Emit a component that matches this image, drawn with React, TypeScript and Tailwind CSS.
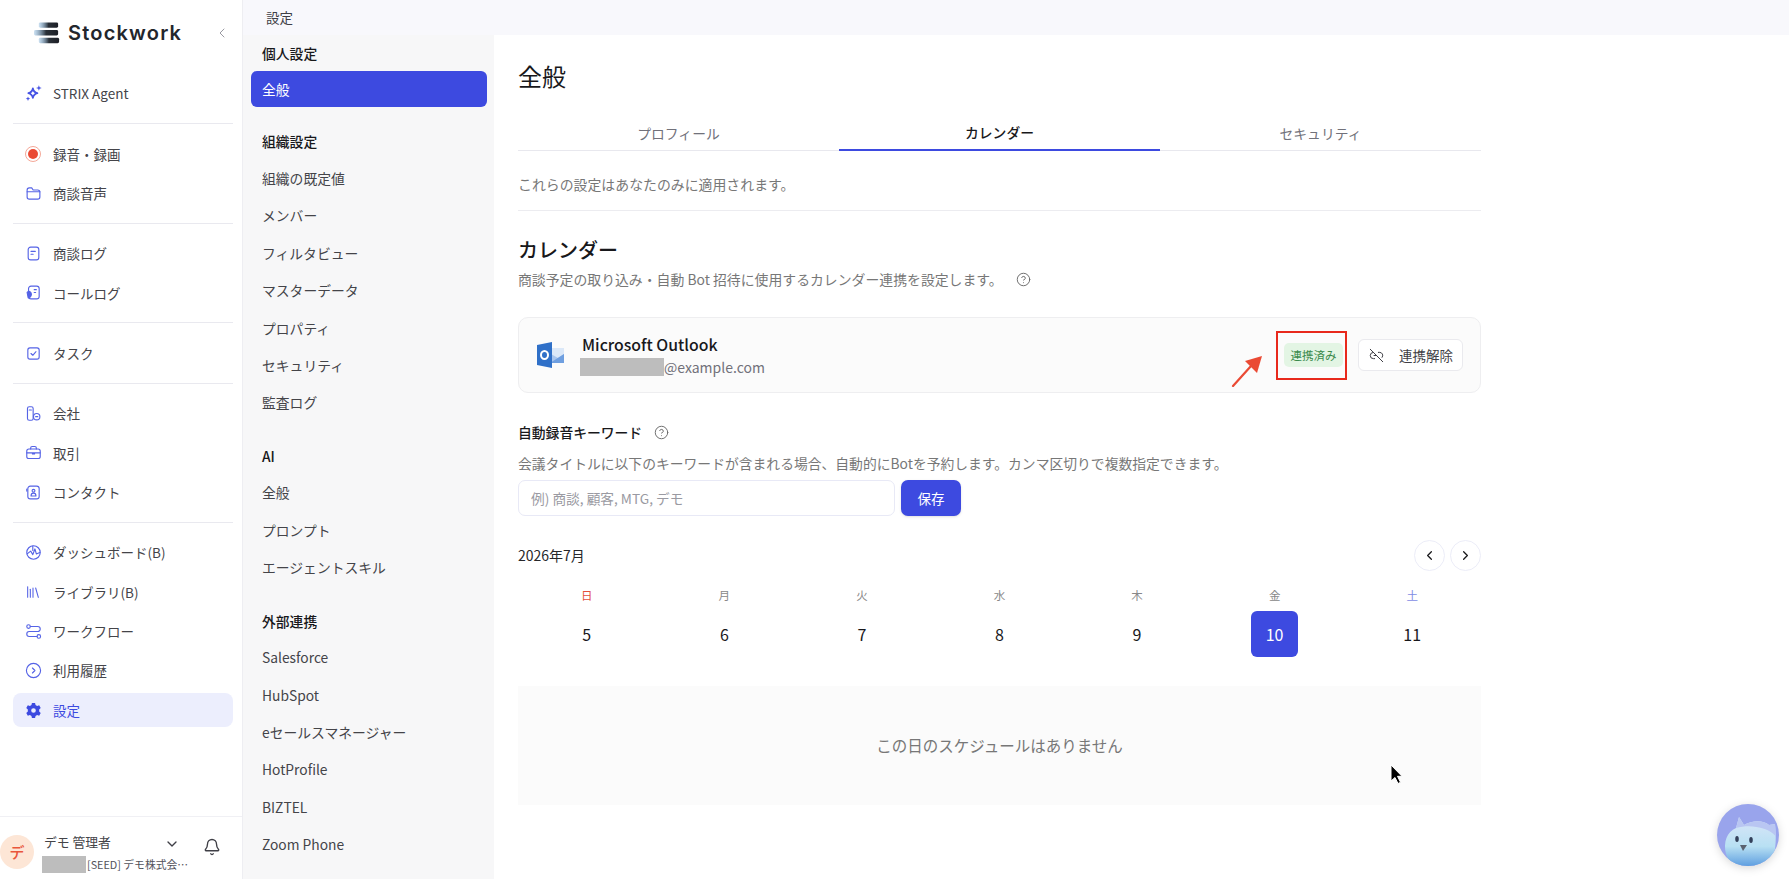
import { Bell, ChevronDown, ChevronLeft, ChevronRight, CircleHelp, Library, Link2Off } from "lucide-react";
import type { ReactNode } from "react";

const Ico = ({ children }: { children: ReactNode }) => (
  <svg viewBox="0 0 24 24" className="w-[17px] h-[17px] text-[#5563e6]" fill="none" stroke="currentColor" strokeWidth="1.600" strokeLinecap="round" strokeLinejoin="round">
    {children}
  </svg>
);

const SparkIcon = () => (
  <svg viewBox="0 0 24 24" className="w-[18px] h-[18px] text-[#4653e4]" fill="currentColor">
    <path d="M10.500 6c.7 3.600 2.400 5.400 6 6.300-3.600.9-5.300 2.700-6 6.300-.7-3.600-2.400-5.400-6-6.300 3.600-.9 5.300-2.700 6-6.300z" fill="none" stroke="currentColor" strokeWidth="2.400" strokeLinejoin="round" />
    <path d="M18.500 1.500l1 2.800 2.800 1-2.800 1-1 2.800-1-2.800-2.800-1 2.800-1zM4 16.500l.9 2.100 2.100.9-2.100.9-.9 2.100-.9-2.100-2.100-.9 2.100-.9z" />
  </svg>
);

const RecIcon = () => (
  <span className="w-[16px] h-[16px] rounded-full border border-[#f5a898] flex items-center justify-center">
    <span className="w-[10px] h-[10px] rounded-full bg-[#ea4a34]" />
  </span>
);

const GearIcon = () => (
  <svg viewBox="0 0 24 24" className="w-[17px] h-[17px] text-[#3d4ae0]" fill="currentColor">
    <path fillRule="evenodd" d="M9.800 1.500h4.400l.7 2.900 2.200 1.200 2.900-.9 2.200 3.800-2.200 2.100v2.800l2.200 2.100-2.200 3.800-2.900-.9-2.200 1.200-.7 2.900H9.800l-.7-2.900-2.200-1.200-2.900.9-2.200-3.800 2.200-2.100v-2.800L1.800 8.500 4 4.700l2.900.9 2.200-1.200zM12 8.700a3.300 3.300 0 1 0 0 6.600 3.300 3.300 0 0 0 0-6.600z" />
  </svg>
);

type NavItem = { label: string; icon: ReactNode; active?: boolean };

const navGroups: NavItem[][] = [
  [{ label: "STRIX Agent", icon: <SparkIcon /> }],
  [
    { label: "録音・録画", icon: <RecIcon /> },
    { label: "商談音声", icon: <Ico><path d="M3 7a3 3 0 0 1 3-3h3.500l2 3H18a3 3 0 0 1 3 3v7a3 3 0 0 1-3 3H6a3 3 0 0 1-3-3z" /><path d="M3 9.500h18" /></Ico> },
  ],
  [
    { label: "商談ログ", icon: <Ico><rect x="4.500" y="3" width="15" height="18" rx="3.500" /><path d="M8.500 9h6M8.500 13h3" /></Ico> },
    { label: "コールログ", icon: <Ico><rect x="5" y="3" width="15" height="18" rx="3.500" /><path d="M13 8h3M13 12h2" /><path d="M3 12c3-3 6-1 6 2.500S6 20 4.500 19.500z" fill="currentColor" /></Ico> },
  ],
  [{ label: "タスク", icon: <Ico><rect x="4" y="4" width="16" height="16" rx="3" /><path d="M8.500 12l2.500 2.500 4.500-5" /></Ico> }],
  [
    { label: "会社", icon: <Ico><rect x="3.500" y="2.500" width="8" height="19" rx="2.500" /><path d="M6 7h3" /><circle cx="16.500" cy="16.500" r="4.500" /><path d="M15 16.500h3" /></Ico> },
    { label: "取引", icon: <Ico><rect x="2.500" y="7" width="19" height="13.500" rx="3" /><path d="M8 7V5.500a2 2 0 0 1 2-2h4a2 2 0 0 1 2 2V7M2.500 12.500h19M10.500 12.500v1.500h3v-1.500" /></Ico> },
    { label: "コンタクト", icon: <Ico><rect x="4" y="3" width="16" height="18" rx="3.500" /><circle cx="12" cy="9.500" r="2" /><path d="M8.500 17c0-5.500 7-5.500 7 0z" /><path d="M2.500 7v3" /></Ico> },
  ],
  [
    { label: "ダッシュボード(B)", icon: <Ico><circle cx="12" cy="12" r="9.500" /><path d="M3 14l5-4 3 5 3-8 2 7 5-2M11 3v6" /></Ico> },
    { label: "ライブラリ(B)", icon: <Library className="w-[16px] h-[16px] text-[#5563e6]" strokeWidth={1.600} /> },
    { label: "ワークフロー", icon: <Ico><circle cx="5" cy="5" r="2.500" /><circle cx="19.500" cy="19" r="2.500" /><path d="M7.500 5H18a3.500 3.500 0 0 1 0 7H6a3.500 3.500 0 0 0 0 7h11" /></Ico> },
    { label: "利用履歴", icon: <Ico><circle cx="12" cy="12" r="10" /><path d="M10.500 8.500l3.500 3.500-3.500 3.500" /></Ico> },
    { label: "設定", icon: <GearIcon />, active: true },
  ],
];

const settingGroups = [
  { title: "個人設定", items: ["全般"] },
  { title: "組織設定", items: ["組織の既定値", "メンバー", "フィルタビュー", "マスターデータ", "プロパティ", "セキュリティ", "監査ログ"] },
  { title: "AI", items: ["全般", "プロンプト", "エージェントスキル"] },
  { title: "外部連携", items: ["Salesforce", "HubSpot", "eセールスマネージャー", "HotProfile", "BIZTEL", "Zoom Phone"] },
];

const days = [
  { w: "日", d: "5", cls: "text-[#e4503c]" },
  { w: "月", d: "6", cls: "text-[#888]" },
  { w: "火", d: "7", cls: "text-[#888]" },
  { w: "水", d: "8", cls: "text-[#888]" },
  { w: "木", d: "9", cls: "text-[#888]" },
  { w: "金", d: "10", cls: "text-[#888]", selected: true },
  { w: "土", d: "11", cls: "text-[#7f8de4]" },
];

function Sidebar() {
  return (
    <aside className="w-[243px] shrink-0 h-full flex flex-col border-r border-[#eeeef2] bg-white">
      <div className="h-[73.700px] shrink-0 flex items-start pl-[34px] pr-[12px] pt-[21px]">
        <svg viewBox="0 0 28 24" className="w-[27px] h-[24px] mr-[7px]">
          <defs>
            <linearGradient id="lg" x1="0" x2="1" y1="0" y2="0">
              <stop offset="0" stopColor="#6fa8d8" stopOpacity="0.35" />
              <stop offset="0.5" stopColor="#2a3038" />
              <stop offset="1" stopColor="#1c1f26" />
            </linearGradient>
          </defs>
          <rect x="5" y="1" width="20" height="5.500" rx="1.500" fill="url(#lg)" />
          <rect x="0" y="9" width="25" height="5.500" rx="1.500" fill="url(#lg)" />
          <rect x="5" y="17" width="21" height="5.500" rx="1.500" fill="url(#lg)" />
        </svg>
        <span className="text-[20px] leading-[24px] font-semibold text-[#23262c] font-['Inter',sans-serif] tracking-[1.200px]">Stockwork</span>
        <ChevronLeft className="w-[16px] h-[16px] text-[#9a9aa2] ml-auto mt-[4px]" strokeWidth={1.500} />
      </div>
      <nav className="pl-[13px] pr-[9px] flex-1">
        {navGroups.map((group, i) => (
          <div key={i}>
            {i > 0 && <div className="h-px bg-[#e9e9ef] my-[10px]" />}
            {group.map((item) => (
              <div
                key={item.label}
                className={`flex items-center rounded-[8px] ${item.active ? "h-[34px] mt-[3px] bg-[#eceefd] text-[#3d4ae0]" : "h-[39.350px] text-[#444449]"}`}
              >
                <span className="w-[40px] pl-[12px] flex items-center shrink-0">{item.icon}</span>
                <span className="text-[13.500px]">{item.label}</span>
              </div>
            ))}
          </div>
        ))}
      </nav>
      <div className="h-[63px] shrink-0 border-t border-[#f0f0f4] flex items-start">
        <span className="mt-[18px] w-[34px] h-[34px] rounded-full bg-[#fde6d6] text-[#e9563c] flex items-center justify-center text-[15px] font-medium shrink-0">デ</span>
        <div className="ml-[8px] w-[122px] shrink-0 pt-[16px]">
          <div className="text-[12.800px] leading-[18px] text-[#444449] pl-[2px]">デモ 管理者</div>
          <div className="mt-[4px] flex items-center text-[10.800px] leading-[18px] text-[#52525b] whitespace-nowrap">
            <span className="w-[44px] h-[17px] bg-[#bdbdbd] shrink-0 mr-[1px]" />
            <span>[SEED] デモ株式会…</span>
          </div>
        </div>
        <ChevronDown className="w-[16px] h-[16px] text-[#3f3f46] mt-[19px]" strokeWidth={2} />
        <Bell className="w-[18px] h-[18px] text-[#3f3f46] ml-[23px] mt-[21px]" strokeWidth={1.800} />
      </div>
    </aside>
  );
}

function SettingsNav() {
  return (
    <div className="w-[251px] shrink-0 bg-[#f7f7f8] pl-[8px] pr-[7px] h-full">
      {settingGroups.map((group) => (
        <div key={group.title} className="mb-[16.700px]">
          <div className="h-[36px] flex items-center pl-[11px] text-[13.800px] font-medium text-[#18181b]">{group.title}</div>
          {group.items.map((label, i) => {
            const active = group.title === "個人設定" && i === 0;
            return (
              <div
                key={label}
                className={`flex items-center pl-[11px] text-[13.800px] rounded-[6px] ${active ? "h-[36px] mb-[1.300px] bg-[#3d4ae0] text-white" : "h-[37.400px] text-[#444449]"}`}
              >
                {label}
              </div>
            );
          })}
        </div>
      ))}
    </div>
  );
}

function OutlookIcon() {
  return (
    <svg viewBox="0 0 27 26" className="w-[27px] h-[26px]">
      <rect x="11" y="6" width="16" height="15" fill="#a9c6ee" />
      <path d="M14 6h13v6l-6 4-7-4z" fill="#dbe8f8" />
      <path d="M13 21l14-9v9z" fill="#6f9fe0" />
      <path d="M0 3l15-3v26L0 23z" fill="#2f70c8" />
      <ellipse cx="7.500" cy="13" rx="3.500" ry="4" fill="none" stroke="#fff" strokeWidth="2" />
    </svg>
  );
}

function BirdAvatar() {
  return (
    <svg viewBox="0 0 62 62" className="absolute left-[1717px] top-[804px] w-[62px] h-[62px] drop-shadow-[0_2px_4px_rgba(0,0,0,0.15)]">
      <defs>
        <clipPath id="bc"><circle cx="31" cy="31" r="31" /></clipPath>
        <linearGradient id="bb" x1="0" x2="0" y1="0" y2="1">
          <stop offset="0" stopColor="#dbe6f8" />
          <stop offset="0.6" stopColor="#b8e0f3" />
          <stop offset="1" stopColor="#5f9fe0" />
        </linearGradient>
      </defs>
      <circle cx="31" cy="31" r="31" fill="#99a4ec" />
      <g clipPath="url(#bc)">
        <path d="M9 50C6 38 10 28 19 24l3-11 5 8c9-5 19-5 25 0l6-1c1 12 2 24-4 42H14z" fill="url(#bb)" />
        <path d="M19 24l3-11 5 8c9-5 19-5 25 0l6-1c.5 4 .6 8 .6 12-8-9-26-12-39.600-8z" fill="#b9c6f2" />
        <ellipse cx="20" cy="35" rx="1.800" ry="3" fill="#33405a" />
        <ellipse cx="34" cy="36" rx="1.800" ry="3" fill="#33405a" />
        <path d="M23 41h7l-4 6z" fill="#5a6270" />
      </g>
    </svg>
  );
}

function Main() {
  return (
    <main className="flex-1 bg-white pl-[24px] pt-[25px]">
      <div className="w-[963px]">
        <h1 className="text-[24px] leading-[32px] font-normal text-[#18181b]">全般</h1>
        <div className="mt-[24px] grid grid-cols-3 border-b border-[#e8e8ee] h-[35px]">
          <div className="flex items-center justify-center text-[13.800px] text-[#71717a]">プロフィール</div>
          <div className="flex items-center justify-center text-[13.800px] font-medium text-[#18181b] border-b-2 border-[#3d4ae0] h-[35px]">カレンダー</div>
          <div className="flex items-center justify-center text-[13.800px] text-[#71717a]">セキュリティ</div>
        </div>
        <p className="mt-[23px] text-[13.900px] leading-[20px] text-[#777]">これらの設定はあなたのみに適用されます。</p>
        <div className="mt-[16px] h-px bg-[#ececf0]" />
        <h2 className="mt-[25px] text-[20px] leading-[28px] font-medium text-[#18181b]">カレンダー</h2>
        <div className="mt-[5px] flex items-center text-[13.860px] leading-[20px] text-[#777]">
          商談予定の取り込み・自動 Bot 招待に使用するカレンダー連携を設定します。
          <CircleHelp className="w-[15px] h-[15px] ml-[13px] text-[#666]" strokeWidth={1.500} />
        </div>

        <div className="relative mt-[28px] h-[76px] rounded-[10px] border border-[#eeeef0] bg-[#fbfbfb] flex items-center pl-[18px] pr-[17px]">
          <OutlookIcon />
          <div className="ml-[16px] flex flex-col">
            <span className="text-[15.800px] leading-[22px] font-medium text-[#18181b] pl-[2px]">Microsoft Outlook</span>
            <span className="mt-[2px] flex items-center text-[14px] leading-[18px] text-[#71717a]">
              <span className="w-[84px] h-[18px] bg-[#bdbdbd]" />@example.com
            </span>
          </div>
          <div className="ml-auto flex items-center">
            <span className="outline-[2.500px] outline-[#e8291c] outline-offset-0 border-t-[10px] border-b-[11px] border-l-[6px] border-r-[2px] border-transparent">
              <span className="block w-[59px] h-[24px] rounded-[5px] bg-[#e3f5e4] text-[#3a8a4c] text-[11.500px] leading-[24px] text-center">連携済み</span>
            </span>
            <button className="ml-[13px] w-[105px] h-[32px] rounded-[6px] border border-[#eaeaee] bg-white flex items-center pl-[10px] text-[13.500px] text-[#3f3f46]">
              <Link2Off className="w-[15px] h-[15px] mr-[15px]" strokeWidth={1.600} />
              連携解除
            </button>
          </div>
          <svg viewBox="0 0 32 34" className="absolute left-[712px] top-[35px] w-[32px] h-[34px]">
            <path d="M2 33L20 13" stroke="#ea4a34" strokeWidth="2.200" strokeLinecap="round" />
            <path d="M31 3l-17 5 12 12z" fill="#ea4a34" />
          </svg>
        </div>

        <div className="mt-[29px] flex items-center text-[13.800px] leading-[20px] font-medium text-[#18181b]">
          自動録音キーワード
          <CircleHelp className="w-[15px] h-[15px] ml-[12px] text-[#666]" strokeWidth={1.500} />
        </div>
        <p className="mt-[11px] text-[13.800px] leading-[20px] text-[#777] whitespace-nowrap">会議タイトルに以下のキーワードが含まれる場合、自動的にBotを予約します。カンマ区切りで複数指定できます。</p>
        <div className="mt-[7px] flex gap-[6px]">
          <div className="w-[377px] h-[36px] rounded-[7px] border border-[#e8e9f6] bg-white flex items-center pl-[12px] text-[13.700px] text-[#9a9aa2]">例) 商談, 顧客, MTG, デモ</div>
          <button className="w-[60px] h-[36px] rounded-[7px] bg-[#3d4ae0] text-white text-[13.500px] shadow-sm">保存</button>
        </div>

        <div className="mt-[24px] h-[31px] flex items-center text-[14px] text-[#27272a]">
          <span>2026年7月</span>
          <span className="ml-auto flex gap-[5px]">
            <span className="w-[31px] h-[31px] rounded-full border border-[#ecedf8] flex items-center justify-center"><ChevronLeft className="w-[15px] h-[15px] text-[#18181b]" strokeWidth={2} /></span>
            <span className="w-[31px] h-[31px] rounded-full border border-[#ecedf8] flex items-center justify-center"><ChevronRight className="w-[15px] h-[15px] text-[#18181b]" strokeWidth={2} /></span>
          </span>
        </div>
        <div className="mt-[16px] grid grid-cols-7">
          {days.map((day) => (
            <div key={day.w} className="flex flex-col items-center">
              <span className={`h-[16px] leading-[16px] text-[11.500px] ${day.cls}`}>{day.w}</span>
              <span className={`mt-[8px] w-[47px] h-[46px] rounded-[6px] flex items-center justify-center text-[16px] ${day.selected ? "bg-[#3d4ae0] text-white" : "text-[#18181b]"}`}>{day.d}</span>
            </div>
          ))}
        </div>
        <div className="mt-[29px] h-[119px] bg-[#fbfbfb] flex items-center justify-center text-[15.500px] text-[#777]">この日のスケジュールはありません</div>
      </div>
    </main>
  );
}

export default function App() {
  return (
    <div className="relative w-[1789px] h-[879px] overflow-hidden flex bg-white font-['Noto_Sans_CJK_JP','Noto_Sans',sans-serif]">
      <Sidebar />
      <div className="flex-1 flex flex-col min-w-0">
        <div className="h-[35px] shrink-0 bg-[#f8f8fc] flex items-center pl-[23px] text-[13.500px] text-[#3f3f46]">設定</div>
        <div className="flex-1 flex min-h-0">
          <SettingsNav />
          <Main />
        </div>
      </div>
      <svg viewBox="0 0 14 21" className="absolute left-[1390px] top-[764px] w-[14px] h-[21px]">
        <path d="M1 1l0 16 4-3.500 3 6 2.500-1.200-3-6H12z" fill="#000" stroke="#fff" strokeWidth="1" />
      </svg>
      <BirdAvatar />
    </div>
  );
}
